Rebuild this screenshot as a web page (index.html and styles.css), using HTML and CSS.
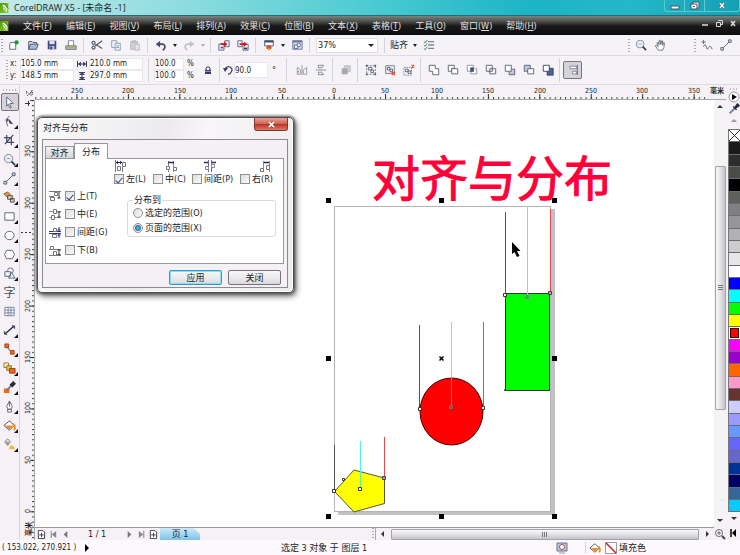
FILE: index.html
```html
<!DOCTYPE html>
<html lang="zh-CN">
<head>
<meta charset="utf-8">
<title>CorelDRAW X5</title>
<link rel="stylesheet" href="styles.css">
</head>
<body>
<svg class="defs" aria-hidden="true">
  <defs>
    <linearGradient id="leafG" x1="0" y1="0" x2="1" y2="1"><stop offset="0" stop-color="#4f9a12"/><stop offset="1" stop-color="#9ad21e"/></linearGradient>
    <symbol id="i-app" viewBox="0 0 12 14"><rect x="0" y="1" width="10" height="12" fill="url(#leafG)"/><path d="M3 3l3 1 3 4-1 4-4-4z" fill="#fff"/><path d="M4 5l4 5M7 3l3 5" stroke="#3d7c10"/></symbol>
    <symbol id="i-new" viewBox="0 0 14 14"><path d="M3 4h6v8H2V6z" fill="#fff" stroke="#596078"/><circle cx="10" cy="4" r="2.5" fill="#189a28"/></symbol>
    <symbol id="i-open" viewBox="0 0 14 14"><path d="M2 12V3h4l1 1h4v2" fill="#dfe5ef" stroke="#3b4766"/><path d="M2 12l2-6h9l-2 6z" fill="#a9bcd4" stroke="#3b4766"/></symbol>
    <symbol id="i-save" viewBox="0 0 14 14"><path d="M2 2h10v10H2z" fill="#3f4c86"/><path d="M4 2h6v4H4z" fill="#dfe6f2"/><path d="M4 8h6v4H4z" fill="#aeb8d4"/><path d="M5 9h2v3H5z" fill="#2c3764"/></symbol>
    <symbol id="i-print" viewBox="0 0 14 14"><path d="M4 8V2h6v6" fill="#fff" stroke="#75798a"/><path d="M1 8h12v4H1z" fill="#c3c4c9" stroke="#5b5e69"/><path d="M2 10h10" stroke="#9fb52e"/></symbol>
    <symbol id="i-cut" viewBox="0 0 14 14"><g fill="none" stroke="#4a5060" stroke-width="1.3"><path d="M5 6l8 5M5 8l8-6"/><circle cx="3" cy="4.500" r="1.800"/><circle cx="3" cy="10" r="1.800"/></g></symbol>
    <symbol id="i-copy" viewBox="0 0 14 14"><g fill="#f2f5fa" stroke="#8791a8"><path d="M2 2h6v8H2z"/><path d="M6 5h6v8H6z"/><path d="M7.500 8h3M7.500 10h3" stroke="#4a9aa8"/></g></symbol>
    <symbol id="i-paste" viewBox="0 0 14 14"><g fill="#d2d2d4" stroke="#b4b4b8"><path d="M2 3h8v9H2z"/><path d="M4 2h4v2H4z"/><path d="M7 6h5v7H7z" fill="#e5e5e7"/></g></symbol>
    <symbol id="i-undo" viewBox="0 0 14 14"><path d="M2 6h6q4 0 3.500 4-.5 2-2.500 3" fill="none" stroke="#454b66" stroke-width="2"/><path d="M1 6l5-4v8z" fill="#454b66"/></symbol>
    <symbol id="i-redo" viewBox="0 0 14 14"><path d="M12 6H6Q2 6 2.500 10q.5 2 2.500 3" fill="none" stroke="#c0c0c8" stroke-width="2"/><path d="M13 6L8 2v8z" fill="#c0c0c8"/></symbol>
    <symbol id="i-import" viewBox="0 0 14 14"><path d="M8 2h5v7H8zM1 6h6v7H1z" fill="#f4f5fa" stroke="#505a7c"/><path d="M3 5h4V3l4 3-4 3V7H3z" fill="#d01818"/><path d="M3 10h3" stroke="#505a7c" stroke-width="2"/></symbol>
    <symbol id="i-export" viewBox="0 0 14 14"><path d="M1 2h5v7H1zM7 6h6v7H7z" fill="#f4f5fa" stroke="#505a7c"/><path d="M3 5h5V3l4 3-4 3V7H3z" fill="#d01818"/><path d="M8 11h4" stroke="#303a5c" stroke-width="2"/></symbol>
    <symbol id="i-launch" viewBox="0 0 14 14"><path d="M2 2h10v6H2z" fill="#fff" stroke="#3b4766"/><path d="M2 2h10v2H2z" fill="#3b4766"/><path d="M5 8h4v2h2l-4 3-4-3h2z" fill="#e32b12"/><path d="M6 10h2v3H6z" fill="#f3a51b"/></symbol>
    <symbol id="i-welcome" viewBox="0 0 14 14"><path d="M2 2h11v10H2z" fill="#cfd9e8" stroke="#66759a"/><path d="M2 2h11v2H2z" fill="#66759a"/><path d="M4 7h4v4H4z" fill="#fff" stroke="#485a8a"/><circle cx="9" cy="7" r="2" fill="#fff" stroke="#485a8a"/></symbol>
    <symbol id="i-options" viewBox="0 0 14 14"><path d="M6 3h7M6 7h7M6 11h7" stroke="#7b8798" stroke-width="1.500"/><path d="M1 3l1.500 1.500L5 1M1 7l1.500 1.500L5 5M1 11l1.500 1.500L5 9" fill="none" stroke="#2f7a46"/></symbol>
    <symbol id="i-zoom" viewBox="0 0 14 14"><circle cx="6" cy="6" r="4.500" fill="#e9eef5" stroke="#7d8698"/><path d="M4 6h4" stroke="#9aa3b5"/><path d="M9 9l4 4" stroke="#363d52" stroke-width="2"/></symbol>
    <symbol id="i-hand" viewBox="0 0 14 14"><path d="M5 13L1.500 8l1-1L5 9 3.500 4.500l1-1L6 6.500l0-5h1.200L8 6.500l1-4.500 1 .3v5l1.200-3.300 1 .5L11.500 10 10 13z" fill="#fff" stroke="#5d6578"/></symbol>
    <symbol id="i-free" viewBox="0 0 14 14"><path d="M3 1v5M.5 3.500h5M3 9q2-5 3 0t3 1 4 2" fill="none" stroke="#4f5b78"/></symbol>
    <symbol id="i-line" viewBox="0 0 14 14"><path d="M3 11l8-8" stroke="#4f5b78"/><path d="M1 10h3v3H1zM10 1h3v3h-3z" fill="#d5dae3" stroke="#4f5b78"/></symbol>
    <symbol id="i-width" viewBox="0 0 10 8"><path d="M.5 1v6M9.500 1v6M1 4h8" stroke="#3c4063"/><path d="M1 4l3-2.500v5zM9 4L6 1.500v5z" fill="#3c4063"/></symbol>
    <symbol id="i-height" viewBox="0 0 10 8"><path d="M2 .5h6M2 7.500h6M5 0v8" stroke="#3c4063"/><path d="M5 0l3 3H2zM5 8l3-3H2z" fill="#3c4063"/></symbol>
    <symbol id="i-lock" viewBox="0 0 10 10"><path d="M3 5V3q2-3 4 0v2" fill="none" stroke="#2e3148"/><path d="M2 5h6v4H2z" fill="#343a6c"/><path d="M2 6.500h6" stroke="#9197bb"/></symbol>
    <symbol id="i-rotate" viewBox="0 0 10 10"><path d="M2 4q2-3.500 5-2t1.500 4.500T5 9" fill="none" stroke="#3c4063" stroke-width="1.300"/><path d="M0 3h5L2 7z" fill="#3c4063"/></symbol>
    <symbol id="i-mirh" viewBox="0 0 14 14"><path d="M7 1v12M1.500 4l4 3v5h-4zM12.500 4v8h-4V7z" fill="none" stroke="#8c8f99"/><path d="M3 8v2" stroke="#6d7079"/></symbol>
    <symbol id="i-mirv" viewBox="0 0 14 14"><path d="M1 7h12M4 1.500h6l-2 3H4zM4 12.500h6l-2-3H4z" fill="none" stroke="#7a7d88"/></symbol>
    <symbol id="i-order" viewBox="0 0 14 14"><path d="M5 2h7v7H5z" fill="#d0d0d2" stroke="#bbb"/><path d="M2 5h7v7H2z" fill="#aaaaad"/></symbol>
    <symbol id="i-group" viewBox="0 0 14 14"><path d="M2 2h10v10H2z" fill="none" stroke="#5a5f70" stroke-dasharray="2 1.500"/><path d="M1 1h2v2H1zM11 1h2v2h-2zM1 11h2v2H1zM11 11h2v2h-2z" fill="#50566b"/><path d="M4 4h4v3H4zM7 7h3v3H7z" fill="#fff" stroke="#4f5870"/></symbol>
    <symbol id="i-ungroup" viewBox="0 0 14 14"><path d="M2 2h10v9H2z" fill="none" stroke="#6a7080"/><path d="M4 4h3v3H4zM7 6h3v3H7z" fill="#fff" stroke="#4f5870"/><path d="M9 9l4 4M13 9l-4 4" stroke="#ee4b22" stroke-width="1.500"/></symbol>
    <symbol id="i-ungroupall" viewBox="0 0 14 14"><path d="M1 4h9v9H1z" fill="none" stroke="#7e8392" stroke-dasharray="2 1"/><path d="M3 6h3v3H3zM6 8h3v3H6z" fill="#fff" stroke="#4f5870"/><path d="M10 1l3 3M13 1l-3 3" stroke="#ee4b22" stroke-width="1.500"/></symbol>
    <symbol id="i-weld" viewBox="0 0 14 14"><path d="M1.500 1.500h7v4h4v7h-7v-4h-4z" fill="#fff" stroke="#50566e"/></symbol>
    <symbol id="i-trim" viewBox="0 0 14 14"><path d="M1.500 1.500h7v4h-3v3h-4z" fill="#fff" stroke="#50566e"/><path d="M5.500 5.500h7v6h-7z" fill="#fff" stroke="#50566e"/></symbol>
    <symbol id="i-inter" viewBox="0 0 14 14"><path d="M1.500 1.500h7v7h-7zM5.500 5.500h7v6h-7z" fill="#fff" stroke="#8a8f9e"/><path d="M5 4h4v5H5z" fill="#444f78"/></symbol>
    <symbol id="i-simpl" viewBox="0 0 14 14"><path d="M1.500 1.500h7v7h-7zM5.500 5.500h7v6h-7z" fill="none" stroke="#50566e"/></symbol>
    <symbol id="i-front" viewBox="0 0 14 14"><path d="M6 9v3.500h6.500V6H9" fill="#c4cadb" stroke="#50566e"/><path d="M1.500 1.500h7v7h-7z" fill="#fff" stroke="#50566e"/></symbol>
    <symbol id="i-back" viewBox="0 0 14 14"><path d="M1.500 1.500h7v7h-7z" fill="#c4cadb" stroke="#50566e"/><path d="M5.500 5.500h7v6h-7z" fill="#fff" stroke="#50566e"/></symbol>
    <symbol id="i-bound" viewBox="0 0 14 14"><path d="M6 5h7v8H6z" fill="#53628e" stroke="#303a5c"/><path d="M1.500 1.500h7v7h-7z" fill="#fff" stroke="#303a5c"/></symbol>
    <symbol id="i-align" viewBox="0 0 14 14"><path d="M12 1v12" stroke="#50566e"/><path d="M3.500 2.500H11v3H3.500zM6.500 8.500H11v3H6.500z" fill="#fff" stroke="#7a8094"/></symbol>
    <symbol id="i-pick" viewBox="0 0 14 14"><path d="M4 1l7 7-4 .3 2 4-1.500.7-2-4L4 11z" fill="#fff" stroke="#59617a"/></symbol>
    <symbol id="i-shape" viewBox="0 0 14 14"><path d="M7 1Q2 5 5 12" fill="none" stroke="#59617a"/><path d="M3 4h3v3H3z" fill="#59617a"/><path d="M6 4l5 6-4-1z" fill="#252b3c"/></symbol>
    <symbol id="i-crop" viewBox="0 0 14 14"><path d="M4 1v8h8M1 4h8v8M2 11L11 1" fill="none" stroke="#424b66" stroke-width="1.300"/></symbol>
    <symbol id="i-smart" viewBox="0 0 14 14"><path d="M1 3l4-2 3 3-3 3z" fill="#e79a3f" stroke="#8a5b2a"/><path d="M5 5h5v4H5zM8 8h4v4H8z" fill="#e8c9a0" stroke="#4c4c58"/></symbol>
    <symbol id="i-rect" viewBox="0 0 14 14"><path d="M2 3h10v8H2z" fill="#fff" stroke="#59617a"/></symbol>
    <symbol id="i-ell" viewBox="0 0 14 14"><ellipse cx="7" cy="7" rx="5" ry="4.500" fill="#fff" stroke="#59617a"/></symbol>
    <symbol id="i-poly" viewBox="0 0 14 14"><path d="M4 2.500h6L12.500 7 10 11.500H4L1.500 7z" fill="#fff" stroke="#59617a"/></symbol>
    <symbol id="i-basic" viewBox="0 0 14 14"><circle cx="8" cy="4" r="3" fill="#fff" stroke="#59617a"/><path d="M2 5h6v5H2zM6 12l3-6 4 6z" fill="#eef1f6" stroke="#59617a"/></symbol>
    <symbol id="i-table" viewBox="0 0 14 14"><path d="M2 2.500h10v9H2zM2 5.500h10M2 8.500h10M5.500 2.500v9M8.500 2.500v9" fill="#fff" stroke="#737f9b"/></symbol>
    <symbol id="i-dim" viewBox="0 0 14 14"><path d="M3 10l8-7" stroke="#252b3c" stroke-width="1.500"/><path d="M1 7l4 5-4-1zM9 1l4 5V2z" fill="#394261"/></symbol>
    <symbol id="i-conn" viewBox="0 0 14 14"><path d="M4 4l6 7" stroke="#39425d"/><path d="M2 1h4v4H2zM8 8h4v4H8z" fill="#ee6b1d" stroke="#a4450f"/></symbol>
    <symbol id="i-blend" viewBox="0 0 14 14"><path d="M1 1h5v5H1z" fill="#fff4d7" stroke="#8b7038"/><path d="M4 4h5v5H4z" fill="#f5ba4d" stroke="#8b7038"/><path d="M7 7h6v5H7z" fill="#ec6a13" stroke="#99400d"/></symbol>
    <symbol id="i-eye" viewBox="0 0 14 14"><path d="M1 8h6v5H1z" fill="#f06c12"/><path d="M4 10l6-6" stroke="#6a7a96" stroke-width="2"/><path d="M7 4l3 3 4-4-3-3z" fill="#252b3c"/></symbol>
    <symbol id="i-drop" viewBox="0 0 14 14"><path d="M2 12l6-6" stroke="#7a8ba8" stroke-width="2.500"/><path d="M6 4l4 4M8 5l3-4 2 2-4 3z" fill="#252b3c" stroke="#252b3c" stroke-width="1.500"/></symbol>
    <symbol id="i-pen" viewBox="0 0 14 14"><path d="M7 1l3 6-1.500 3h-3L4 7zM5 10h4v3H5zM7 2v5" fill="#fff" stroke="#59617a"/></symbol>
    <symbol id="i-bucket" viewBox="0 0 14 14"><path d="M1 7l6-5 5 5-5 5z" fill="#fff" stroke="#4b4b56"/><path d="M2 7h9l-4 4z" fill="#f28a16"/><path d="M11 5q3 3 1 7" fill="none" stroke="#f28a16" stroke-width="2"/></symbol>
    <symbol id="i-meshfill" viewBox="0 0 14 14"><path d="M2 4l3-3 3 3-3 4z" fill="#e3edf7" stroke="#5c6e8f"/><path d="M3 4h4L5 7z" fill="#d18a3d"/><path d="M6 12l2-4h3l2 4z" fill="#f6ba3e"/></symbol>
    <symbol id="i-addpage" viewBox="0 0 10 10"><path d="M1.500.5h5l2 2v7h-7z" fill="#fff" stroke="#34343e"/><path d="M5 3v5M2.500 5.500h5" stroke="#34343e"/></symbol>
    <symbol id="i-dh" viewBox="0 0 12 12"><path d="M1.500 0v12" stroke="#777"/><path d="M2 2.500h6" stroke="#262a52"/><path d="M2 2.500l2-2v4zM8 2.500l-2-2v4z" fill="#262a52"/><path d="M3.500 6.500h3v4h-3zM8.500 2.500h3v4h-3zM8.500 7v5" fill="#fff" stroke="#777"/></symbol>
    <symbol id="i-dhc" viewBox="0 0 12 12"><path d="M3.500 1v11M8.500 1v11" stroke="#888"/><path d="M3 2.500h6" stroke="#262a72" stroke-width="1.500"/><path d="M1.500 6.500h3v3h-3zM8.500 7.500h3v3h-3z" fill="#fff" stroke="#777"/></symbol>
    <symbol id="i-dhs" viewBox="0 0 12 12"><path d="M4.500 0v12M7.500 0v12" stroke="#669"/><path d="M0 2.500h4M8 2.500h4" stroke="#262a72" stroke-width="1.500"/><path d="M1.500 6.500h3v3h-3zM7.500 4.500h3v3h-3z" fill="#fff" stroke="#888"/></symbol>
    <symbol id="i-dhr" viewBox="0 0 12 12"><path d="M4.500 1v11M10.500 1v11" stroke="#888"/><path d="M5 2.500h5" stroke="#262a52" stroke-width="1.500"/><path d="M1.500 8.500h3v3h-3zM7.500 5.500h3v4h-3z" fill="#fff" stroke="#777"/></symbol>
  </defs>
</svg>

<div class="app">
  <header class="titlebar">
    <svg class="logo"><use href="#i-app"/></svg>
    <h1>CorelDRAW X5 - [未命名 -1]</h1>
    <div class="winctl">
      <button aria-label="最小化"><svg viewBox="0 0 24 11"><path d="M8 6h8v3H8z" fill="#fff" stroke="#456"/></svg></button>
      <button aria-label="还原"><svg viewBox="0 0 24 11"><path d="M10 2h6v6h-6z" fill="#fff" stroke="#456"/><path d="M8 4h6v5H8z" fill="#fff" stroke="#456"/><path d="M10 6h2v1h-2z" fill="#456"/></svg></button>
      <button class="wide" aria-label="关闭"><svg viewBox="0 0 34 11"><path d="M14 2l6 7M20 2l-6 7" stroke="#456" stroke-width="3.500"/><path d="M14 2l6 7M20 2l-6 7" stroke="#fff" stroke-width="2"/></svg></button>
    </div>
  </header>

  <nav class="menubar">
    <svg class="logo"><use href="#i-app"/></svg>
    <div class="menus">
      <button>文件(<u>F</u>)</button><button>编辑(<u>E</u>)</button><button>视图(<u>V</u>)</button><button>布局(<u>L</u>)</button><button>排列(<u>A</u>)</button><button>效果(<u>C</u>)</button><button>位图(<u>B</u>)</button><button>文本(<u>X</u>)</button><button>表格(<u>T</u>)</button><button>工具(<u>O</u>)</button><button>窗口(<u>W</u>)</button><button>帮助(<u>H</u>)</button>
    </div>
    <div class="docctl">
      <button aria-label="最小化文档"><svg viewBox="0 0 14 10"><path d="M4 6h6" stroke="#ddd" stroke-width="1.500"/></svg></button>
      <button aria-label="还原文档"><svg viewBox="0 0 14 10"><path d="M6.500 2v-.5h4v4H9M4.500 3.500h4v4h-4z" fill="none" stroke="#ddd"/></svg></button>
      <button aria-label="关闭文档"><svg viewBox="0 0 14 10"><path d="M5 2l4 5M9 2L5 7" stroke="#ddd" stroke-width="1.500"/></svg></button>
    </div>
  </nav>

  <div class="bar standard">
    <i class="grip"></i>
    <button aria-label="新建"><svg><use href="#i-new"/></svg></button>
    <button aria-label="打开"><svg><use href="#i-open"/></svg></button>
    <button aria-label="保存"><svg><use href="#i-save"/></svg></button>
    <button aria-label="打印"><svg><use href="#i-print"/></svg></button>
    <i class="sep"></i>
    <button aria-label="剪切"><svg><use href="#i-cut"/></svg></button>
    <button aria-label="复制"><svg><use href="#i-copy"/></svg></button>
    <button aria-label="粘贴" disabled><svg><use href="#i-paste"/></svg></button>
    <i class="sep"></i>
    <button aria-label="撤消"><svg><use href="#i-undo"/></svg></button>
    <button class="caret" aria-label="撤消列表"></button>
    <button aria-label="重做" disabled><svg><use href="#i-redo"/></svg></button>
    <button class="caret dim" aria-label="重做列表" disabled></button>
    <i class="sep"></i>
    <button aria-label="导入"><svg><use href="#i-import"/></svg></button>
    <button aria-label="导出"><svg><use href="#i-export"/></svg></button>
    <i class="sep"></i>
    <button aria-label="启动器"><svg><use href="#i-launch"/></svg></button>
    <button class="caret" aria-label="启动器列表"></button>
    <button aria-label="欢迎屏幕"><svg><use href="#i-welcome"/></svg></button>
    <i class="sep"></i>
    <span class="combo"><select aria-label="缩放级别"><option>37%</option></select></span>
    <i class="sep"></i>
    <button class="text">贴齐</button>
    <button class="caret" aria-label="贴齐列表"></button>
    <button aria-label="选项"><svg><use href="#i-options"/></svg></button>
    <span class="spring"></span>
    <i class="grip"></i>
    <button aria-label="缩放"><svg><use href="#i-zoom"/></svg></button>
    <button aria-label="平移"><svg><use href="#i-hand"/></svg></button>
    <span class="gap"></span>
    <i class="grip"></i>
    <button aria-label="手绘"><svg><use href="#i-free"/></svg></button>
    <button aria-label="两点线"><svg><use href="#i-line"/></svg></button>
  </div>

  <div class="bar property">
    <i class="grip"></i>
    <div class="pair labels"><label for="px">x:</label><label for="py">y:</label></div>
    <div class="pair pos"><input id="px" value="105.0 mm"><input id="py" value="148.5 mm"></div>
    <div class="pair glyphs"><svg><use href="#i-width"/></svg><svg><use href="#i-height"/></svg></div>
    <div class="pair pos"><input aria-label="宽度" value="210.0 mm"><input aria-label="高度" value="297.0 mm"></div>
    <i class="sep"></i>
    <div class="pair scale"><input aria-label="水平缩放" value="100.0"><input aria-label="垂直缩放" value="100.0"></div>
    <div class="pair labels pct"><span>%</span><span>%</span></div>
    <button aria-label="锁定比率"><svg class="sm"><use href="#i-lock"/></svg></button>
    <i class="sep"></i>
    <svg class="sm"><use href="#i-rotate"/></svg>
    <input class="angle" aria-label="旋转角度" value="90.0"><span class="deg">°</span>
    <i class="sep"></i>
    <button aria-label="水平镜像"><svg><use href="#i-mirh"/></svg></button>
    <button aria-label="垂直镜像"><svg><use href="#i-mirv"/></svg></button>
    <i class="sep"></i>
    <button aria-label="顺序" disabled><svg><use href="#i-order"/></svg></button>
    <i class="sep"></i>
    <button aria-label="群组"><svg><use href="#i-group"/></svg></button>
    <button aria-label="取消群组"><svg><use href="#i-ungroup"/></svg></button>
    <button aria-label="取消全部群组"><svg><use href="#i-ungroupall"/></svg></button>
    <i class="sep"></i>
    <button aria-label="焊接"><svg><use href="#i-weld"/></svg></button>
    <button aria-label="修剪"><svg><use href="#i-trim"/></svg></button>
    <button aria-label="相交"><svg><use href="#i-inter"/></svg></button>
    <button aria-label="简化"><svg><use href="#i-simpl"/></svg></button>
    <button aria-label="移除后面"><svg><use href="#i-front"/></svg></button>
    <button aria-label="移除前面"><svg><use href="#i-back"/></svg></button>
    <button aria-label="边界"><svg><use href="#i-bound"/></svg></button>
    <i class="sep"></i>
    <button class="pressed" aria-label="对齐与分布"><svg><use href="#i-align"/></svg></button>
  </div>

  <div class="work">
    <aside class="toolbox">
      <i class="dots"></i>
      <button class="pressed" aria-label="选择"><svg><use href="#i-pick"/></svg></button>
      <button class="fly" aria-label="形状"><svg><use href="#i-shape"/></svg></button>
      <button class="fly" aria-label="裁剪"><svg><use href="#i-crop"/></svg></button>
      <button class="fly" aria-label="缩放工具"><svg><use href="#i-zoom"/></svg></button>
      <button class="fly" aria-label="手绘工具"><svg><use href="#i-line"/></svg></button>
      <button class="fly" aria-label="智能填充"><svg><use href="#i-smart"/></svg></button>
      <button class="fly" aria-label="矩形"><svg><use href="#i-rect"/></svg></button>
      <button class="fly" aria-label="椭圆"><svg><use href="#i-ell"/></svg></button>
      <button class="fly" aria-label="多边形"><svg><use href="#i-poly"/></svg></button>
      <button class="fly" aria-label="基本形状"><svg><use href="#i-basic"/></svg></button>
      <button class="zi">字</button>
      <button aria-label="表格工具"><svg><use href="#i-table"/></svg></button>
      <button class="fly" aria-label="度量"><svg><use href="#i-dim"/></svg></button>
      <button class="fly" aria-label="连接器"><svg><use href="#i-conn"/></svg></button>
      <button class="fly" aria-label="调和"><svg><use href="#i-blend"/></svg></button>
      <button class="fly" aria-label="滴管"><svg><use href="#i-eye"/></svg></button>
      <button class="fly" aria-label="轮廓"><svg><use href="#i-pen"/></svg></button>
      <button class="fly" aria-label="填充"><svg><use href="#i-bucket"/></svg></button>
      <button class="fly" aria-label="交互式填充"><svg><use href="#i-meshfill"/></svg></button>
    </aside>

    <div class="corner"><svg viewBox="0 0 15 15"><path d="M6 8h2M10 8h4M6 6l6 5M12 5v6M7 11l5-5" stroke="#333" stroke-dasharray="1 1"/></svg></div>

    <div class="hruler">
      <svg viewBox="35 85 679 15" width="679" height="15">
        <defs><pattern id="ht" x="333.600" y="85" width="5.143" height="15" patternUnits="userSpaceOnUse"><rect y="12" width="1" height="2" fill="#444"/></pattern>
        <pattern id="hT" x="333.600" y="85" width="51.430" height="15" patternUnits="userSpaceOnUse"><rect y="9" width="1" height="5" fill="#333"/></pattern></defs>
        <rect x="35" y="85" width="673" height="15" fill="url(#ht)"/><rect x="35" y="85" width="673" height="15" fill="url(#hT)"/>
        <g class="rl"><text x="77" y="93">250</text><text x="128" y="93">200</text><text x="180" y="93">150</text><text x="231" y="93">100</text><text x="282" y="93">50</text><text x="334" y="93">0</text><text x="385" y="93">50</text><text x="437" y="93">100</text><text x="488" y="93">150</text><text x="540" y="93">200</text><text x="591" y="93">250</text><text x="642" y="93">300</text><text x="694" y="93">350</text><text class="mm" x="717" y="93" >毫米</text></g>
      </svg>
    </div>

    <div class="vruler">
      <svg viewBox="20 100 15 439" width="15" height="439">
        <defs><pattern id="vt" x="20" y="511.300" width="15" height="5.143" patternUnits="userSpaceOnUse"><rect x="12" width="2" height="1" fill="#444"/></pattern>
        <pattern id="vT" x="20" y="511.300" width="15" height="51.430" patternUnits="userSpaceOnUse"><rect x="10" width="4" height="1" fill="#333"/></pattern></defs>
        <rect x="20" y="100" width="15" height="439" fill="url(#vt)"/><rect x="20" y="100" width="15" height="439" fill="url(#vT)"/>
        <g class="rl"><text transform="translate(30 151) rotate(-90)">350</text><text transform="translate(30 203) rotate(-90)">300</text><text transform="translate(30 254) rotate(-90)">250</text><text transform="translate(30 306) rotate(-90)">200</text><text transform="translate(30 357) rotate(-90)">150</text><text transform="translate(30 408) rotate(-90)">100</text><text transform="translate(30 460) rotate(-90)">50</text><text transform="translate(30 511) rotate(-90)">0</text><text class="mm" transform="translate(31 529) rotate(-90)">毫米</text></g>
        <path d="M25 103.500h5M28.500 101v5" stroke="#333"/>
        <path d="M21 232.500h12" stroke="#333" stroke-dasharray="2 2"/>
      </svg>
    </div>

    <main class="canvas">
      <svg viewBox="35 100 679 427" width="679" height="427">
        <path d="M551 209h4v306H338v-3h213z" fill="#c1c1c5"/>
        <rect x="334.500" y="206.500" width="216" height="305" fill="#fff" stroke="#b5b5b5"/>
        <text class="headline" x="372" y="196">对齐与分布</text>
        <rect x="505.500" y="293.500" width="44" height="97" fill="#0f0" stroke="#333"/>
        <ellipse cx="451.500" cy="411.500" rx="31.500" ry="33.500" fill="#f00" stroke="#400"/>
        <path d="M334.500 491.500l19.500-21.500 30.500 8v25.500L354 512z" fill="#ff0" stroke="#554"/>
        <g fill="none">
          <path d="M505.500 212v82M419.500 325v84M334.500 445v46" stroke="#555"/>
          <path d="M527.500 206v90M451.500 322v56M360.500 441v33" stroke="#4df3f3"/>
          <path d="M451.500 378v28" stroke="#a08080"/><path d="M360.500 474v13" stroke="#5f8"/>
          <path d="M550.500 209v84M483.500 322v86M384.500 437v41" stroke="#e84850"/>
        </g>
        <g fill="#fff" stroke="#333"><path d="M503.500 293.500h3v3h-3zM418.500 407.500h3v3h-3zM481.500 406.500h3v3h-3zM332.500 489.500h3v3h-3zM358.500 487.500h3v3h-3zM342.500 478.500h2v2h-2zM504.500 389.500h1v1h-1z"/></g>
        <path d="M525.500 295.500h3v3h-3z" fill="#0c3" stroke="#a06aa0"/><path d="M548.500 291.500h3v3h-3z" fill="#9a9" stroke="#444"/><path d="M449.500 405.500h3v3h-3z" fill="#c33" stroke="#577"/><path d="M382.500 476.500h3v3h-3z" fill="#b9a" stroke="#444"/>
        <path d="M326 198h5v5h-5zM439 198h5v5h-5zM552 198h5v5h-5zM326 356h5v5h-5zM552 356h5v5h-5zM326 514h5v5h-5zM439 514h5v5h-5zM552 514h5v5h-5z"/>
        <path d="M439.500 356.500l4 4M443.500 356.500l-4 4" stroke="#000" stroke-width="1.500"/>
        <path d="M512 242v12l2.500-2 2.500 5 2.500-1-2.500-5h3.500z"/>
      </svg>
    </main>

    <div class="vscroll"><b class="arrow up"></b><div class="track"><div class="thumb"><i></i></div></div><b class="arrow down"></b></div>

    <div class="pagebar">
      <div class="pages">
        <button aria-label="添加页"><svg><use href="#i-addpage"/></svg></button>
        <button aria-label="首页"><svg viewBox="0 0 10 10"><path d="M2.500 1v8" stroke="#777"/><path d="M8 1v8L3 5z" fill="#888"/></svg></button>
        <button aria-label="上一页"><svg viewBox="0 0 10 10"><path d="M7 1v8L3 5z" fill="#777"/></svg></button>
        <span class="count">1 / 1</span>
        <button aria-label="下一页"><svg viewBox="0 0 10 10"><path d="M3 1v8l4-4z" fill="#777"/></svg></button>
        <button aria-label="末页"><svg viewBox="0 0 10 10"><path d="M7.500 1v8" stroke="#777"/><path d="M2 1v8l5-4z" fill="#888"/></svg></button>
        <button aria-label="在后添加页"><svg><use href="#i-addpage"/></svg></button>
        <button class="tab">页 1</button>
      </div>
      <i class="grip"></i>
      <div class="hscroll"><b class="arrow left"></b><div class="hthumb"><i></i></div><b class="arrow right"></b></div>
    </div>
    <button class="nav" aria-label="导航器"><svg viewBox="0 0 12 12"><circle cx="5" cy="5" r="3.500" fill="#fff" stroke="#667"/><path d="M8 8l3 3" stroke="#445" stroke-width="2"/><path d="M5 3v4M3 5h4" stroke="#667"/></svg></button>

    <aside class="palette">
      <i class="dots"></i>
      <button class="menu" aria-label="调色板菜单"><svg viewBox="0 0 12 12"><circle cx="6" cy="6" r="5" fill="#fff" stroke="#999"/><path d="M4 3l5 3-5 3z"/></svg></button>
      <button class="pick" aria-label="颜色滴管"><svg viewBox="0 0 14 14"><use href="#i-drop" width="14" height="14"/></svg></button>
      <b class="arrow up pale"></b>
      <div class="swatches">
        <span class="none"></span><span class="c1"></span><span class="c2"></span><span class="c3"></span><span class="c4"></span><span class="c5"></span><span class="c6"></span><span class="c7"></span><span class="c8"></span><span class="c9"></span><span class="c10"></span><span class="c11"></span><span class="c12"></span><span class="c13"></span><span class="c14"></span><span class="c15"></span><span class="c16"></span><span class="c17"></span><span class="c18"></span><span class="c19"></span><span class="c20"></span><span class="c21"></span><span class="c22"></span><span class="c23"></span><span class="c24"></span><span class="c25"></span><span class="c26"></span><span class="c27"></span><span class="c28"></span><span class="c29"></span><span class="c30"></span>
      </div>
      <b class="arrow down"></b>
      <svg class="expand" viewBox="0 0 12 10"><path d="M3 1v8" stroke="#000" stroke-width="1.500"/><path d="M8 1v8L4 5z"/></svg>
    </aside>
  </div>

  <footer class="status">
    <span class="coords">( 153.022, 270.921 )</span><b class="play"></b>
    <span class="sel">选定 3 对象 于 图层 1</span>
    <div class="fillinfo">
      <svg class="proof" viewBox="0 0 12 12"><path d="M1 1h10v8H1z" fill="#b9c8dd" stroke="#667390"/><circle cx="6" cy="5" r="2.500" fill="#fff" stroke="#a55"/><path d="M3 11h6" stroke="#999"/></svg>
      <i class="sep"></i>
      <svg class="bk"><use href="#i-bucket"/></svg>
      <svg class="nofill" viewBox="0 0 12 12"><path d="M.5.5h11v11H.5z" fill="#fff" stroke="#999"/><path d="M1 1l10 10" stroke="#c22" stroke-width="1.500"/></svg>
      <span>填充色</span>
    </div>
  </footer>
</div>

<section class="dialog" role="dialog" aria-labelledby="dt">
  <header><h2 id="dt">对齐与分布</h2><button class="close" aria-label="关闭对话框"><svg viewBox="0 0 10 8"><path d="M2 1l6 6M8 1L2 7" stroke="#733" stroke-width="3"/><path d="M2 1l6 6M8 1L2 7" stroke="#fff" stroke-width="2"/></svg></button></header>
  <div class="dbody">
    <div class="tabs" role="tablist"><button role="tab" aria-selected="false">对齐</button><button role="tab" aria-selected="true">分布</button></div>
    <div class="panel">
      <div class="horiz">
        <label><svg><use href="#i-dh"/></svg><span><input type="checkbox" checked>左(L)</span></label>
        <label><svg><use href="#i-dhc"/></svg><span><input type="checkbox">中(C)</span></label>
        <label><svg><use href="#i-dhs"/></svg><span><input type="checkbox">间距(P)</span></label>
        <label><svg><use href="#i-dhr"/></svg><span><input type="checkbox">右(R)</span></label>
      </div>
      <div class="vert">
        <label><svg viewBox="0 0 12 12"><path d="M0 1.500h12M0 6.500h5" stroke="#777"/><path d="M10 2v6M8.500 8h3" stroke="#333"/><path d="M5.500 2.500h3v3h-3zM1.500 7.500h4v3h-4z" fill="#fff" stroke="#777"/></svg><input type="checkbox" checked>上(T)</label>
        <label><svg viewBox="0 0 12 12"><path d="M0 3.500h12M0 9.500h12" stroke="#999"/><path d="M10 4v5M8.500 4h3M8.500 9h3" stroke="#333"/><path d="M4.500 1.500h3v4h-3zM2.500 7.500h3v4h-3z" fill="#fff" stroke="#777"/></svg><input type="checkbox">中(E)</label>
        <label><svg viewBox="0 0 12 12"><path d="M0 5.500h12M0 7.500h12" stroke="#337"/><path d="M10 1v4M10 8v4M8.500 4h3M8.500 9h3" stroke="#229"/><path d="M4.500 2.500h3v3h-3zM3.500 8.500h4v3h-4z" fill="#fff" stroke="#777"/></svg><input type="checkbox">间距(G)</label>
        <label><svg viewBox="0 0 12 12"><path d="M0 5.500h12M0 11.500h12" stroke="#777"/><path d="M10 6v5M8.500 6h3M8.500 10.500h3" stroke="#333"/><path d="M1.500 2.500h3v3h-3zM4.500 7.500h3v4h-3z" fill="#fff" stroke="#777"/></svg><input type="checkbox">下(B)</label>
      </div>
      <fieldset>
        <legend>分布到</legend>
        <label><input type="radio" name="to">选定的范围(O)</label>
        <label><input type="radio" name="to" checked>页面的范围(X)</label>
      </fieldset>
    </div>
    <div class="actions"><button class="primary">应用</button><button>关闭</button></div>
  </div>
</section>
</body>
</html>
```
FILE: styles.css
```css
* { box-sizing: border-box; }
body {
  margin: 0;
  font: 9px/12px "DejaVu Sans Condensed", "Noto Sans CJK SC", sans-serif;
  color: #1c1c1c;
  background: #f5f1f6;
}
button {
  margin: 0;
  padding: 0;
  border: 0;
  background: none;
  font: inherit;
  color: inherit;
  display: flex;
  align-items: center;
  justify-content: center;
  flex: none;
}
input, select { font: inherit; color: inherit; margin: 0; }
svg { display: block; flex: none; }
.defs { position: absolute; width: 0; height: 0; }

.app {
  height: 100vh;
  display: grid;
  grid-template-rows: 16px 19px 21px 29px minmax(0, 1fr) 15px;
  overflow: hidden;
}

/* Title bar */
.titlebar {
  display: flex;
  align-items: center;
  background: linear-gradient(90deg, #c3e9e9 0, #8ddcdf 25%, #4bcbd2 50%, #1bb4c6 72%, #25b7c9 85%, #14a0b4 100%);
  border-bottom: 1px solid #2b6870;
}
.titlebar .logo { width: 10px; height: 12px; }
.titlebar h1 {
  flex: 1;
  margin: 0 0 0 4px;
  font: 9px/12px "Open Sans", "Noto Sans CJK SC", sans-serif;
}
.winctl { display: flex; align-self: flex-start; border: 1px solid #5cc; border-top: 0; border-radius: 0 0 3px 3px; }
.winctl button { width: 20px; height: 11px; border-right: 1px solid #5ecdd6; }
.winctl .wide { width: 34px; border: 0; }
.winctl svg { width: 24px; height: 11px; }

/* Menu bar */
.menubar {
  display: flex;
  align-items: center;
  color: #e2e2e2;
  background: linear-gradient(#7d827e 0, #4a4c4a 30%, #191919 52%, #0c0c0c 100%);
}
.menubar .logo { width: 10px; height: 12px; }
.menus { display: flex; flex: 1; gap: 14px; margin-left: 13px; }
.menus u { text-underline-offset: 1px; }
.docctl { display: flex; align-self: flex-start; margin-top: 3px; }
.docctl svg { width: 14px; height: 10px; }

/* Toolbars */
.bar {
  display: flex;
  align-items: center;
  background: #f6f3f8;
  border-bottom: 1px solid #dedae0;
}
.standard { padding-right: 5px; }
.bar button { width: 19px; height: 18px; }
.bar svg { width: 12px; height: 12px; }
.bar svg.sm { width: 10px; height: 10px; }
.bar .sep, .status .sep { width: 1px; height: 15px; background: #d6d2d9; margin: 0 3px; flex: none; }
.grip { width: 2px; height: 13px; margin: 0 1px; flex: none; background: repeating-linear-gradient(#aaa 0 1px, transparent 1px 3px); }
.bar .caret { width: 9px; }
.caret::before, .combo::after {
  content: "";
  border: 2px solid transparent;
  border-top: 3px solid #222;
  border-bottom: 0;
}
.caret.dim::before { border-top-color: #aaa; }
.combo { position: relative; width: 62px; margin: 0 3px; flex: none; }
.combo::after { position: absolute; right: 4px; top: 6px; border-width: 3px; border-bottom: 0; }
.combo select {
  display: block;
  appearance: none;
  width: 100%;
  height: 15px;
  border: 1px solid #e2dee5;
  background: #fff;
  padding: 0 1px;
}
.bar .text { width: 22px; }
.spring { flex: 1; }
.bar .gap { width: 24px; }

.property { padding-left: 5px; font-size: 8px; }
.property .sep { height: 24px; margin: 0 5px; }
.property button + .sep { margin: 0 3px 0 2px; }
.property .grip { height: 20px; }
.pair { display: grid; grid-template-rows: 12px 12px; flex: none; }
.pair input, .angle {
  width: 100%;
  border: 1px solid #eae6ec;
  background: #fff;
  padding: 0;
  height: 12px;
}
.labels { width: 11px; padding-left: 1px; }
.pos { width: 54px; }
.glyphs { width: 15px; place-items: center; }
.glyphs svg { width: 10px; height: 8px; }
.scale { width: 30px; }
.pct { width: 14px; padding-left: 3px; }
.bar .angle { width: 34px; height: 16px; flex: none; margin-left: 1px; }
.deg { width: 13px; padding-left: 4px; font-size: 9px; }
.bar .pressed, .toolbox .pressed { border: 1px solid #77747c; border-radius: 2px; background: #d5d2d9; }

/* Work area */
.work {
  min-height: 0;
  display: grid;
  grid-template-columns: 20px 15px minmax(0, 1fr) 12px 14px;
  grid-template-rows: 15px minmax(0, 1fr) 13px;
}
.toolbox {
  grid-row: 1 / 4;
  border-right: 1px solid #d8d4dc;
  display: flex;
  flex-direction: column;
  align-items: center;
}
.dots { width: 14px; height: 2px; margin: 4px 0 2px; flex: none; background: repeating-linear-gradient(90deg, #bbb 0 1px, transparent 1px 3px); }
.toolbox button { position: relative; width: 18px; height: 19px; }
.toolbox svg { width: 13px; height: 13px; }
.toolbox .pressed { height: 18px; margin-bottom: 1px; }
.fly::after {
  content: "";
  position: absolute;
  right: 1px;
  bottom: 2px;
  border: 2px solid #111;
  border-top-color: transparent;
  border-left-color: transparent;
}
.toolbox .zi { font-size: 12px; color: #454d63; }
.corner svg { width: 15px; height: 15px; }
.hruler, .vruler, .canvas { overflow: hidden; }
.hruler { grid-column: 3 / 5; border-bottom: 1px solid #aaa; }
.hruler svg { overflow: visible; }
.vruler { grid-column: 2; grid-row: 2 / 4; border-right: 1px solid #aaa; }
.rl { font-size: 7px; text-anchor: middle; fill: #222; }
.rl .mm { font-weight: bold; }
.canvas { grid-column: 3; grid-row: 2; background: #fff; }
.headline { font-family: "Noto Sans CJK SC", sans-serif; font-size: 48px; fill: #ff0038; stroke: #ff0038; stroke-width: 1px; }

.arrow { width: 0; height: 0; border: 3px solid transparent; flex: none; }
.arrow.up { border-bottom-color: #333; border-top: 0; }
.arrow.down { border-top-color: #333; border-bottom: 0; }
.arrow.left { border-right-color: #333; border-left: 0; }
.arrow.right { border-left-color: #333; border-right: 0; }
.arrow.pale { border-bottom-color: #999; }
.vscroll { grid-column: 4; grid-row: 2; display: flex; flex-direction: column; align-items: center; padding: 5px 0; background: #f3f2f5; }
.track { flex: 1; width: 11px; padding: 58px 0 109px; }
.thumb, .hthumb {
  display: flex;
  align-items: center;
  justify-content: center;
  height: 100%;
  border: 1px solid #a2a2a8;
  border-radius: 1px;
  background: linear-gradient(90deg, #fafafa, #e2e2e4 50%, #c4c4c9);
}
.thumb i { width: 5px; height: 6px; background: repeating-linear-gradient(#777 0 1px, transparent 1px 2px); }
.pagebar { grid-column: 3; grid-row: 3; display: flex; align-items: center; border-top: 1px solid #999; }
.pages { display: flex; align-items: center; flex: 341 1 0; min-width: 0; height: 12px; }
.pages button { width: 12px; height: 12px; }
.pages svg { width: 9px; height: 9px; }
.count { width: 52px; text-align: center; }
.pages .tab {
  width: 40px;
  margin-left: 1px;
  background: linear-gradient(#cdeafa, #7cc3ea);
  clip-path: polygon(0 0, 85% 0, 100% 50%, 100% 100%, 0 100%);
}
.hscroll { flex: 332 1 0; min-width: 0; display: flex; align-items: center; gap: 7px; height: 12px; padding: 0 5px; border-left: 1px solid #aaa; }
.hthumb { flex: 1; height: 11px; background: linear-gradient(#fafafa, #e2e2e4 50%, #c4c4c9); }
.hthumb i { width: 6px; height: 5px; background: repeating-linear-gradient(90deg, #777 0 1px, transparent 1px 2px); }
.nav { grid-column: 4; grid-row: 3; }
.nav svg { width: 12px; height: 12px; }

/* Colour palette */
.palette { grid-column: 5; grid-row: 1 / 4; padding-left: 2px; display: flex; flex-direction: column; align-items: center; min-height: 0; }
.palette .dots { width: 8px; margin: 3px 0 1px; }
.palette .menu svg { width: 12px; height: 12px; }
.palette .pick svg { width: 12px; height: 12px; }
.palette .arrow.up { margin: 4px 0 7px; }
.palette .arrow.down { margin: 5px 0 8px; }
.expand { width: 12px; height: 10px; margin-bottom: 2px; }
.swatches { flex: 1; min-height: 0; align-self: stretch; display: flex; flex-direction: column; border-left: 1px solid #777; border-top: 1px solid #777; }
.swatches span { flex: 1; border-bottom: 1px solid #6c6c70; }
.none { background: linear-gradient(45deg, transparent 47%, #333 47% 53%, transparent 53%), linear-gradient(135deg, #fff 47%, #333 47% 53%, #fff 53%); }
.c1 { background: #1a1a1a; }
.c2 { background: #2d2d2d; }
.c3 { background: #4a4c4a; }
.c4 { background: #000; }
.c5 { background: #5d605d; }
.c6 { background: #808082; }
.c7 { background: #969698; }
.c8 { background: #b1b1b3; }
.c9 { background: #ccc; }
.c10 { background: #e6e6e6; }
.c11 { background: #fff; }
.c12 { background: #00f; }
.c13 { background: #0ff; }
.c14 { background: #0f0; }
.c15 { background: #ff0; }
.c16 { background: #f00; box-shadow: inset 0 0 0 1px #fff, inset 0 0 0 2px #300; }
.c17 { background: #f0f; }
.c18 { background: #90c; }
.c19 { background: #f60; }
.c20 { background: #f9c; }
.c21 { background: #633; }
.c22 { background: #ccf; }
.c23 { background: #99f; }
.c24 { background: #69f; }
.c25 { background: #66f; }
.c26 { background: #66c; }
.c27 { background: #039; }
.c28 { background: #006; }
.c29 { background: #369; }
.c30 { background: #0cf; }

/* Status bar */
.status { display: grid; grid-template-columns: 85px 196px minmax(0, 1fr) 184px; align-items: center; background: #fbf9fc; }
.coords { padding-left: 2px; white-space: nowrap; font-size: 8px; }
.play { width: 0; height: 0; border: 4px solid transparent; border-left-color: #000; border-right: 0; }
.fillinfo { display: flex; align-items: center; gap: 2px; }
.proof { width: 12px; height: 12px; margin-right: 14px; }
.status .sep { height: 11px; margin: 0 1px; }
.bk { width: 12px; height: 12px; }
.nofill { width: 12px; height: 12px; margin-left: 2px; }

/* Align and distribute dialog */
.dialog {
  position: absolute;
  left: 37px;
  top: 117px;
  width: 257px;
  padding: 0 5px 4px 4px;
  border: 1px solid #4d4d50;
  border-radius: 5px;
  background: linear-gradient(100deg, #fafafa, #eceaed 45%, #f8f6f9 60%, #ecebee);
  box-shadow: inset 0 0 0 1px #fff, 0 0 3px 1px #555, 2px 3px 6px #666;
}
.dialog header { display: flex; justify-content: space-between; height: 21px; }
.dialog h2 { margin: 3px 0 0 1px; font-size: 9px; font-weight: normal; line-height: 14px; }
.close { width: 34px; height: 13px; border: 1px solid #7d3a35; border-top: 0; border-radius: 0 0 3px 3px; background: linear-gradient(#e7a399, #d0614f 50%, #b93321 51%, #dc7a62); }
.close svg { width: 9px; height: 7px; }
.dbody { border: 1px solid #8d8b91; background: #f5f0f5; padding: 3px 3px 2px 2px; }
.tabs { display: flex; align-items: flex-end; height: 15px; }
.tabs button { width: 29px; height: 12px; border: 1px solid #98969c; border-bottom: 0; background: linear-gradient(#f4f3f5, #d5d4d8); }
.tabs [aria-selected="true"] { width: 34px; height: 16px; margin-bottom: -1px; background: #fff; z-index: 1; }
.panel {
  display: grid;
  grid-template-columns: 76px minmax(0, 1fr);
  grid-template-rows: 28px 8px 68px;
  border: 1px solid #98969c;
  background: #fff;
  padding: 0 4px 0 3px;
}
.panel label { display: flex; align-items: center; white-space: nowrap; }
.panel svg { width: 12px; height: 12px; }
.horiz { grid-column: 1 / 3; display: grid; grid-template-columns: 39px 39px 48px 34px; padding-left: 65px; padding-top: 1px; }
.horiz label { flex-direction: column; align-items: flex-start; gap: 1px; }
.horiz label:nth-child(n+2) svg { margin-left: 12px; }
.horiz label:last-child svg { margin-left: 19px; }
.horiz span { display: flex; align-items: center; }
.vert { grid-row: 2 / 4; display: grid; grid-template-rows: repeat(4, 18px); }
.vert svg { margin-right: 4px; }
.dialog input { appearance: none; flex: none; width: 10px; height: 10px; margin-right: 2px; border: 1px solid #8e8f8f; background: linear-gradient(135deg, #ddd, #fafafa); display: grid; place-items: center; }
.dialog [type="checkbox"]:checked::before { content: ""; width: 3px; height: 6px; border: solid #2d3c93; border-width: 0 1px 1px 0; transform: rotate(40deg); }
.dialog [type="radio"] { border-radius: 50%; }
.dialog [type="radio"]:checked::before { content: ""; width: 6px; height: 6px; border-radius: 50%; background: radial-gradient(#5fc4ee, #0d4a7c); }
fieldset { grid-column: 2; grid-row: 3; margin: 0 3px 0 2px; padding: 0 5px; height: 42px; border: 1px solid #dcd9de; border-radius: 3px; display: grid; grid-template-rows: 15px 15px; }
legend { padding: 0 1px; line-height: 10px; }
.actions { display: flex; justify-content: flex-end; gap: 6px; margin: 6px 3px 0 0; }
.actions button { width: 53px; height: 15px; border: 1px solid #76747a; border-radius: 2px; background: linear-gradient(#f8f8f8, #ebebed 50%, #d9d9dc); }
.actions .primary { border-color: #2b9ccc; box-shadow: inset 0 0 0 1px #8fdcf5; }
```
